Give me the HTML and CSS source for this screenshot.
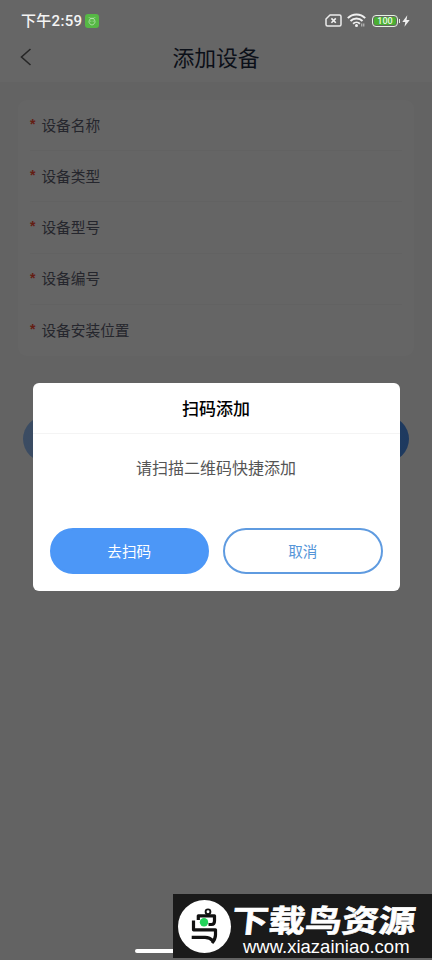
FILE: index.html
```html
<!DOCTYPE html>
<html lang="zh-CN">
  <head>
    <meta charset="UTF-8" />
    <meta name="viewport" content="width=device-width, initial-scale=1.0" />
    <title>添加设备</title>
    <link rel="stylesheet" href="styles.css">
  </head>
  <body>
    <div class="page">
      <div class="status-bar">
        <div class="status-left">
          <span class="status-time">下午2:59</span>
          <svg class="status-app" viewBox="0 0 14 14">
            <rect width="14" height="14" rx="3" fill="#56b845" />
            <path d="M4 3.300 5 4.300h4l1-1M4.400 6.200c0-2.200 5.200-2.200 5.200 0 .6 1.500.4 2.500-.2 3-.6 2.200-4.200 2.200-4.800 0-.6-.5-.8-1.500-.2-3zM5.300 7.200h1m1.400 0h1" fill="none" stroke="#b7e3ae" stroke-width=".9" />
          </svg>
        </div>
        <div class="status-right">
          <svg width="17" height="13" viewBox="0 0 17 13">
            <path d="M5 1h9.500a1.500 1.500 0 0 1 1.500 1.500v8a1.500 1.500 0 0 1-1.500 1.500h-12A1.500 1.500 0 0 1 1 10.500V5z" fill="none" stroke="#ececec" stroke-width="1.500" stroke-linejoin="round" />
            <path d="m6.400 4.400 4.400 4.400m0-4.400L6.400 8.800" stroke="#f2f2f2" stroke-width="1.600" />
          </svg>
          <svg class="wifi" width="19" height="15" viewBox="0 0 19 15">
            <g fill="none" stroke="#f0f0f0" stroke-width="1.900">
              <path d="M.8 5.200a12.200 12.200 0 0 1 17.400 0" />
              <path d="M3.500 8a8.500 8.500 0 0 1 12 0" />
              <path d="M6.100 10.700a4.900 4.900 0 0 1 6.800 0" />
            </g>
            <circle cx="9.500" cy="12.600" r="1.500" fill="#f0f0f0" />
            <path d="M14.800 13.500v-3m2 0v3" stroke="#ccc" stroke-width="1" />
          </svg>
          <div class="battery"><span>100</span></div>
          <svg class="bolt" width="8" height="12" viewBox="0 0 8 12">
            <path d="M5.300.3.300 7h3L2.500 11.700 7.700 4.900H4.500z" fill="#efefef" />
          </svg>
        </div>
      </div>

      <header class="nav-bar">
        <svg class="back" width="12" height="18" viewBox="0 0 12 18">
          <path d="M10.500 1 1.500 9l9 8" fill="none" stroke="#606060" stroke-width="1.600" />
        </svg>
        <h1>添加设备</h1>
      </header>

      <main class="content">
        <div class="form-card">
          <div class="form-row"><i>*</i><span>设备名称</span></div>
          <div class="form-row"><i>*</i><span>设备类型</span></div>
          <div class="form-row"><i>*</i><span>设备型号</span></div>
          <div class="form-row"><i>*</i><span>设备编号</span></div>
          <div class="form-row"><i>*</i><span>设备安装位置</span></div>
        </div>
        <div class="submit"></div>
      </main>
    </div>

    <div class="mask">
      <div class="modal">
        <h2 class="modal-title">扫码添加</h2>
        <p class="modal-text">请扫描二维码快捷添加</p>
        <div class="modal-actions">
          <button class="btn btn-primary">去扫码</button>
          <button class="btn btn-outline">取消</button>
        </div>
      </div>
    </div>

    <div class="home-bar"></div>

    <div class="watermark">
      <svg class="watermark-logo" width="54" height="54" viewBox="0 0 54 54">
        <circle cx="26.500" cy="26.500" r="26.500" fill="#fff" />
        <g fill="none" stroke="#111" stroke-width="3.200" stroke-linejoin="round">
          <path d="M20.300 20v-4.200H36.500V21q0 3.500-3 3.500h-3" />
          <circle cx="30" cy="11.800" r="2.400" stroke-width="1.900" />
          <path d="M15.500 20.500v9.300H37.500V35q0 4-3.500 8" />
          <path d="M13.700 37.300H27q5 0 7.500 3.200" />
        </g>
        <circle cx="26" cy="22.300" r="4.200" fill="#22d35a" />
      </svg>
      <div class="watermark-text">
        <strong>下载鸟资源</strong>
        <span>www.xiazainiao.com</span>
      </div>
    </div>
  </body>
</html>
```
FILE: styles.css
```css
* {
  box-sizing: border-box;
  margin: 0;
  padding: 0;
}

body {
  font-family: "Noto Sans CJK SC", sans-serif;
  width: 432px;
  height: 960px;
  overflow: hidden;
  position: relative;
  background: #f7f7f7;
}

.page {
  height: 960px;
}

/* status bar stays bright above the mask */
.status-bar {
  height: 34px;
  padding: 7px 22px 0 21px;
  display: flex;
  justify-content: space-between;
  align-items: center;
  position: relative;
  z-index: 3;
}

.status-left,
.status-right {
  display: flex;
  align-items: center;
}

.status-time {
  font-family: Roboto, "Noto Sans CJK SC", sans-serif;
  font-size: 15px;
  font-weight: 500;
  line-height: 20px;
  letter-spacing: 0.3px;
  color: #f4f4f4;
}

.status-app {
  width: 14px;
  height: 14px;
  margin-left: 3px;
}

.wifi {
  margin-left: 5px;
}

.battery {
  width: 26px;
  height: 12px;
  margin-left: 6px;
  padding: 1px;
  border: 1px solid #e6f3e2;
  border-radius: 4px;
  position: relative;
}

.battery span {
  display: block;
  height: 8px;
  border-radius: 2px;
  background: #4bae32;
  color: #e9f7e4;
  font: 500 9px/8.5px Roboto, sans-serif;
  text-align: center;
}

.battery::after {
  content: "";
  position: absolute;
  right: -3px;
  top: 3px;
  width: 1px;
  height: 4px;
  background: #e6e6e6;
}

.bolt {
  margin-left: 4px;
}

.nav-bar {
  height: 82px;
  margin-top: -34px;
  padding: 34px 20px 0;
  display: grid;
  grid-template-columns: 12px 1fr 12px;
  align-items: center;
  background: #fff;
}

.nav-bar h1 {
  padding-bottom: 3px;
  font-size: 21.8px;
  font-weight: 400;
  line-height: 45px;
  text-align: center;
  color: #1c2a40;
}

.back {
  margin-top: -2px;
}

.content {
  padding: 18px 18px 0;
}

.form-card {
  padding: 0 12px;
  border-radius: 9px;
  background: #fdfdfd;
}

.form-row {
  height: 51.2px;
  padding-bottom: 2px;
  display: flex;
  align-items: center;
  border-bottom: 1px solid #f6f6f6;
  font-size: 14.7px;
  color: #5d6070;
}

.form-row:last-child {
  border-bottom: none;
}

.form-row i {
  width: 11.4px;
  font: bold 14px/14px "Liberation Sans", sans-serif;
  color: #fa4b33;
}

.submit {
  height: 46px;
  margin: 60px 5px 0;
  border-radius: 23px;
  background: linear-gradient(90deg, #94bdf5, #4a90ee);
}

.mask {
  position: absolute;
  inset: 0;
  z-index: 2;
  display: flex;
  justify-content: center;
  align-items: center;
  padding-top: 14px;
  background: rgba(0, 0, 0, 0.6);
}

.modal {
  width: 367px;
  height: 208px;
  border-radius: 6px;
  background: #fff;
}

.modal-title {
  height: 51px;
  border-bottom: 1px solid #f4f4f4;
  font-size: 17px;
  font-weight: 500;
  line-height: 50px;
  text-align: center;
  color: #000;
}

.modal-text {
  height: 94px;
  padding-top: 21px;
  font-size: 16px;
  line-height: 24px;
  text-align: center;
  color: #555;
}

.modal-actions {
  display: grid;
  grid-template-columns: 1fr 1fr;
  gap: 14px;
  padding: 0 17px;
}

.btn {
  height: 46px;
  padding-bottom: 2px;
  border: 2px solid #4c97f7;
  border-radius: 23px;
  font-family: inherit;
  font-size: 14.6px;
}

.btn-primary {
  background: #4c97f7;
  color: #fff;
}

.btn-outline {
  border-color: #5f9be0;
  background: #fff;
  color: #5595d8;
}

.home-bar {
  position: absolute;
  left: 135px;
  bottom: 7px;
  z-index: 3;
  width: 162px;
  height: 4px;
  border-radius: 2px;
  background: #fff;
}

.watermark {
  position: absolute;
  right: 0;
  bottom: 2px;
  z-index: 4;
  width: 259px;
  height: 64px;
  padding: 6px 5px;
  display: flex;
  background: #1a1a1a;
  color: #fff;
}

.watermark-logo {
  flex: none;
}

.watermark-text {
  display: flex;
  flex-direction: column;
}

.watermark-text strong {
  height: 37px;
  font-size: 36.8px;
  font-weight: 700;
  line-height: 37px;
  white-space: nowrap;
  transform: scaleY(0.84) skewX(-5deg);
  -webkit-text-stroke: 0.8px #fff;
}

.watermark-text span {
  padding-left: 11px;
  font: 18.5px/20px "Liberation Sans", sans-serif;
}
```
